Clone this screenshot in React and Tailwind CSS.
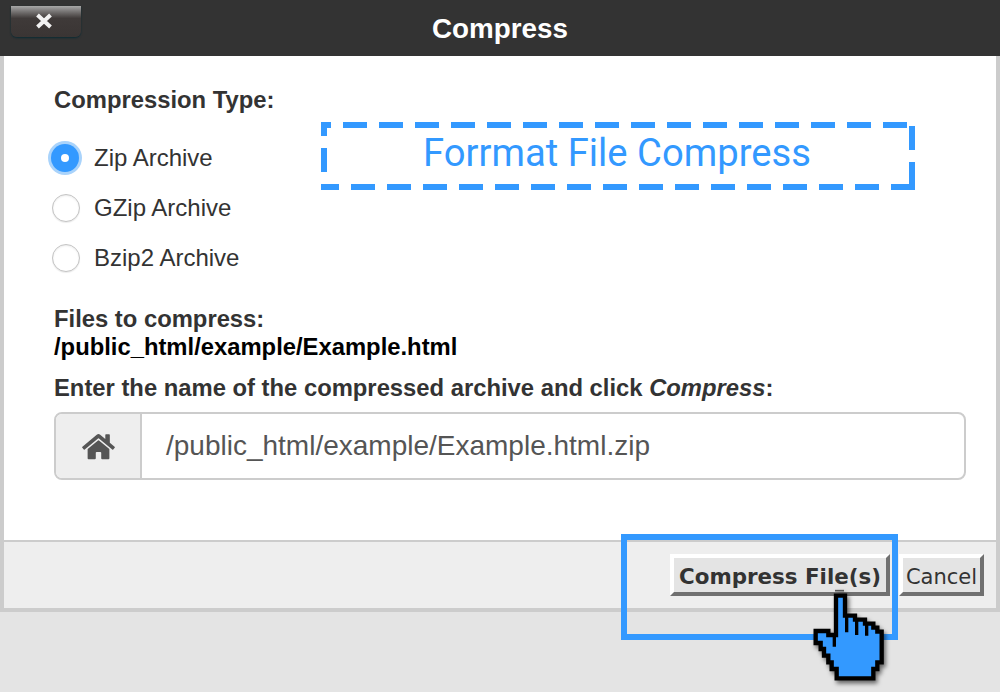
import React from "react";

const sans = "font-['Liberation_Sans',Arial,sans-serif]";

function Radio({ checked, label }) {
  return (
    <div className="flex items-center h-[50px]">
      {checked ? (
        <span className="ml-[-6px] mr-[12px] w-[34px] h-[34px] rounded-full bg-[#a9d3fb] flex items-center justify-center shrink-0">
          <span className="w-[28px] h-[28px] rounded-full bg-[#3399ff] flex items-center justify-center">
            <span className="w-[8px] h-[8px] rounded-full bg-white" />
          </span>
        </span>
      ) : (
        <span className="ml-[-2px] mr-[14px] w-[28px] h-[28px] rounded-full border-[1.5px] border-[#c4c4c4] bg-white shadow-[inset_0_1px_2px_rgba(0,0,0,0.08),0_1px_1px_rgba(0,0,0,0.08)] shrink-0" />
      )}
      <span className="text-[24px] text-[#333333] leading-none">{label}</span>
    </div>
  );
}

function Hand() {
  return (
    <svg viewBox="0 0 300 300" className="absolute left-[800px] top-[585px] w-[100px] h-[100px] drop-shadow-[2px_3px_2px_rgba(0,0,0,0.55)]">
      <path
        d="M108 32H135V92H165V104H195V116H220V128H232V140H245V232H232V252H220V280H110V252H95V232H85V212H72V192H62V174H47V138H85V150H108Z"
        fill="#3399ff"
        stroke="#000000"
        strokeWidth="13"
        strokeLinejoin="miter"
      />
      <path d="M103 150V185M140 92V142M170 104V150M200 116V152" stroke="#000000" strokeWidth="10" fill="none" />
      <path d="M105 17H132" stroke="#555555" strokeWidth="5" fill="none" />
    </svg>
  );
}

export default function App() {
  return (
    <div className={`relative w-[1000px] h-[692px] overflow-hidden bg-[#e4e4e4] ${sans}`}>
      <header className="relative h-[56px] bg-[#333333] flex items-center justify-center">
        <button className="absolute left-[11px] top-[6px] w-[70px] h-[31px] rounded-b-[6px] bg-gradient-to-b from-[#a8a8a8] via-[#3f3a39] via-40% to-[#3a3534] shadow-[0_1px_2px_#0a2a33] flex items-center justify-center pr-[4px] pb-[2px]">
          <svg viewBox="0 0 18 16" className="w-[18px] h-[16px]">
            <path d="M2.5 2 15.5 14M15.5 2 2.5 14" stroke="#f2f2f2" strokeWidth="4" fill="none" />
          </svg>
        </button>
        <h1 className="text-[27.8px] font-bold text-white leading-none pt-[2px]">Compress</h1>
      </header>

      <main className="h-[484px] bg-white border-x-4 border-[#cccccc] pl-[50px] pr-[30px] pt-[31px]">
        <p className="text-[23.8px] font-bold text-[#333333] leading-[26px]">Compression Type:</p>
        <div className="mt-[20px] mb-[22px]">
          <Radio checked label="Zip Archive" />
          <Radio label="GZip Archive" />
          <Radio label="Bzip2 Archive" />
        </div>
        <p className="text-[23.8px] font-bold text-[#333333] leading-[28px]">Files to compress:</p>
        <p className="text-[23.8px] font-bold text-black leading-[28px]">/public_html/example/Example.html</p>
        <p className="mt-[13px] text-[23.8px] font-bold text-[#333333] leading-[28px]">
          Enter the name of the compressed archive and click <em>Compress</em>:
        </p>
        <div className="mt-[10px] h-[68px] w-[912px] flex rounded-[8px] border-2 border-[#cccccc] overflow-hidden">
          <span className="w-[86px] bg-[#eeeeee] border-r-2 border-[#cccccc] flex items-center justify-center">
            <svg viewBox="0 0 576 512" className="w-[33px] h-[29px]" fill="#555555">
              <path d="M280 148 96 300v164a16 16 0 0 0 16 16l112-.3a16 16 0 0 0 16-16V368a16 16 0 0 1 16-16h64a16 16 0 0 1 16 16v96a16 16 0 0 0 16 16l112 .3a16 16 0 0 0 16-16V300L296 148a12 12 0 0 0-16 0z" />
              <path d="M572 259 488 190V51a12 12 0 0 0-12-12h-56a12 12 0 0 0-12 12v73L318 50a48 48 0 0 0-61 0L4 259a12 12 0 0 0-2 17l26 31a12 12 0 0 0 17 2L280 115a12 12 0 0 1 16 0l235 194a12 12 0 0 0 17-2l26-31a12 12 0 0 0-2-17z" />
            </svg>
          </span>
          <span className="flex-1 flex items-center pl-[24px] text-[28px] text-[#555555]">/public_html/example/Example.html.zip</span>
        </div>
      </main>

      <footer className="h-[72px] bg-[#eeeeee] border-x-4 border-t-2 border-b-4 border-[#cccccc] flex items-start justify-end pt-[12px] pr-[12px] gap-[9px] font-['DejaVu_Sans',Verdana,sans-serif] text-[#333333]">
        <button className="h-[42px] w-[220px] pt-[4px] bg-[#e4e4e4] border-[4px] border-t-white border-l-white border-r-[#707070] border-b-[#707070] text-[21.4px] font-bold leading-none whitespace-nowrap">Compress File(s)</button>
        <button className="h-[42px] w-[85px] pt-[4px] bg-[#e4e4e4] border-[4px] border-t-white border-l-white border-r-[#707070] border-b-[#707070] text-[21px] leading-none">Cancel</button>
      </footer>

      <div className="absolute left-[321px] top-[122px] w-[594px] h-[68px] flex items-center justify-center pb-[6px] pr-[2px]">
        <svg viewBox="0 0 594 68" className="absolute inset-0 w-full h-full" fill="none" stroke="#3399ff" strokeWidth="6">
          <path d="M0 3H586" strokeDasharray="24 12" strokeDashoffset="14" />
          <path d="M0 65H594" strokeDasharray="24 12" strokeDashoffset="6" />
          <path d="M3 0V68" strokeDasharray="24 12" strokeDashoffset="10" />
          <path d="M591 4V28M591 40V68" />
        </svg>
        <span className="font-['Roboto',sans-serif] text-[38.2px] text-[#3399ff] leading-none">Forrmat File Compress</span>
      </div>

      <div className="absolute left-[621px] top-[534px] w-[277px] h-[106px] border-[6px] border-[#3399ff]" />
      <Hand />
    </div>
  );
}
